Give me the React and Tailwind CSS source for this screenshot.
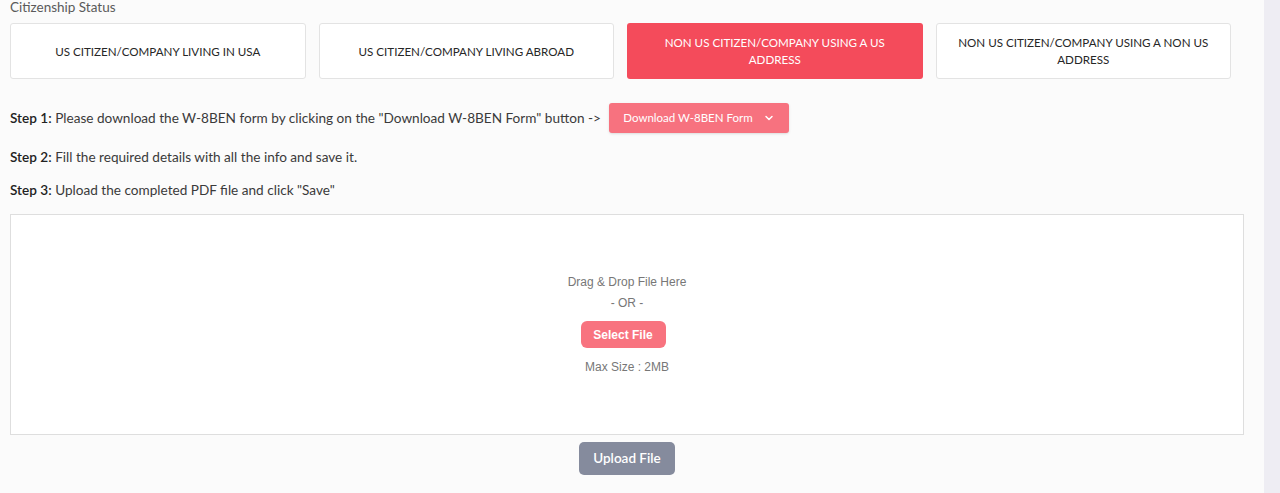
import { ChevronDown } from "lucide-react";

const OPTIONS = [
  "US CITIZEN/COMPANY LIVING IN USA",
  "US CITIZEN/COMPANY LIVING ABROAD",
  "NON US CITIZEN/COMPANY USING A US ADDRESS",
  "NON US CITIZEN/COMPANY USING A NON US ADDRESS",
];

const App = () => {
  const active = 2;

  return (
    <div className="flex h-[493px] w-[1280px] overflow-hidden bg-[#fbfbfb] font-['Lato',sans-serif]">
      <div className="flex-1 pl-[10px] pr-[20px]">
        {/* Citizenship status */}
        <p className="text-[13.5px] leading-[14px] text-[#5a5a5a]">Citizenship Status</p>
        <div className="mt-[9px] flex gap-[13px]">
          {OPTIONS.map((o, i) => (
            <button
              key={o}
              className={
                i === active
                  ? "flex h-[56px] w-[295.5px] items-center justify-center rounded-[3px] bg-[#f44b5b] px-[18px] text-center text-[11.6px] leading-[17px] text-white"
                  : "flex h-[56px] w-[295.5px] items-center justify-center rounded-[3px] border border-[#e3e3e3] bg-white px-[18px] text-center text-[11.6px] leading-[17px] text-[#262626]"
              }
            >
              {o}
            </button>
          ))}
        </div>

        {/* Steps */}
        <div className="mt-[24px] flex items-center gap-[8px] text-[13.6px] text-[#3a3a3a]">
          <p>
            <span className="font-semibold text-[#222]">Step 1:</span> Please download the W-8BEN form by
            clicking on the "Download W-8BEN Form" button -&gt;
          </p>
          <button className="flex h-[30px] w-[180px] items-center justify-center gap-[10px] rounded-[3px] bg-[#f7727f] text-[11.5px] text-white shadow-sm">
            Download W-8BEN Form
            <ChevronDown size={12} strokeWidth={3} />
          </button>
        </div>
        <p className="mt-[16px] text-[13.6px] leading-[16px] text-[#3a3a3a]">
          <span className="font-semibold text-[#222]">Step 2:</span> Fill the required details with all the info
          and save it.
        </p>
        <p className="mt-[17px] text-[13.6px] leading-[16px] text-[#3a3a3a]">
          <span className="font-semibold text-[#222]">Step 3:</span> Upload the completed PDF file and click "Save"
        </p>

        {/* Drop zone */}
        <div className="mt-[16px] flex h-[221px] w-[1234px] flex-col items-center justify-center border border-[#dedede] bg-white font-['Liberation_Sans',sans-serif] text-[12px] text-[#777]">
          <p className="leading-[14px]">Drag &amp; Drop File Here</p>
          <p className="mt-[7px] leading-[14px]">- OR -</p>
          <button className="mr-2 mt-[11px] h-[27px] w-[85px] rounded-[6px] bg-[#f8737f] text-[12px] font-bold text-white">
            Select File
          </button>
          <p className="mt-[12px] leading-[14px]">Max Size : 2MB</p>
        </div>

        <div className="mt-[7px] flex w-[1234px] justify-center">
          <button className="h-[33px] w-[96px] rounded-[5px] bg-[#858b9d] text-[13.5px] font-semibold text-white">
            Upload File
          </button>
        </div>
      </div>
      {/* Scrollbar track */}
      <div className="w-[16px] shrink-0 bg-[#eeedf3]" />
    </div>
  );
};

export default App;
